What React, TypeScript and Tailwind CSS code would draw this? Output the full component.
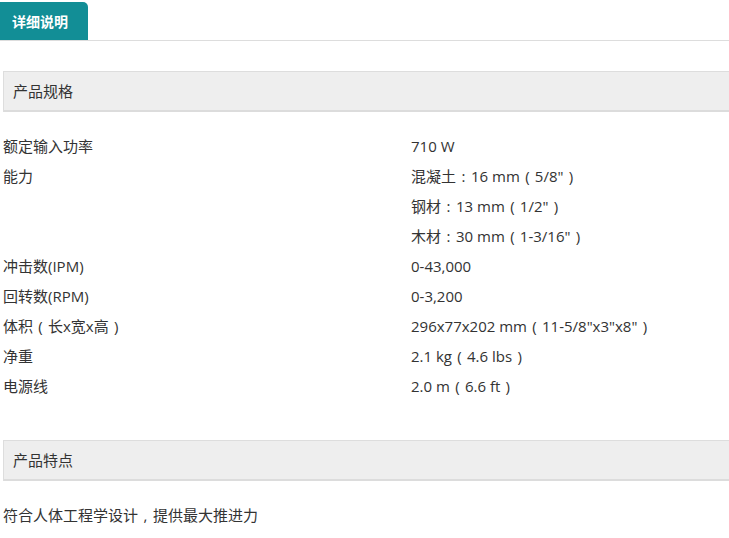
const specs: [string, string[]][] = [
  ["额定输入功率", ["710 W"]],
  ["能力", ["混凝土：16 mm（5/8\"）", "钢材：13 mm（1/2\"）", "木材：30 mm（1-3/16\"）"]],
  ["冲击数(IPM)", ["0-43,000"]],
  ["回转数(RPM)", ["0-3,200"]],
  ["体积（长x宽x高）", ["296x77x202 mm（11-5/8\"x3\"x8\"）"]],
  ["净重", ["2.1 kg（4.6 lbs）"]],
  ["电源线", ["2.0 m（6.6 ft）"]],
]

const centered: Record<string, string> = { "（": "(", "）": ")", "，": ",", "：": ":" }

// full-width punctuation drawn centered in a 1em box
function Cjk({ text }: { text: string }) {
  const parts = text.split(/([（），：])/)
  return (
    <>
      {parts.map((p, i) =>
        centered[p] ? (
          <span key={i} className="inline-block w-[1em] text-center">
            {centered[p]}
          </span>
        ) : (
          <span key={i}>{p}</span>
        )
      )}
    </>
  )
}

function SectionHeader({ title }: { title: string }) {
  return (
    <div className="ml-[3px] -mr-[4px] h-[41px] flex items-center pl-[9px] bg-[#eeeeee] border border-[#dddddd] border-b-2 border-b-[#dcdcdc] text-[15px] text-[#333]">
      {title}
    </div>
  )
}

export default function App() {
  return (
    <div
      className="w-[729px] h-[538px] bg-white overflow-hidden text-[#333]"
      style={{ fontFamily: '"Open Sans", "Noto Sans CJK SC", sans-serif' }}
    >
      <div className="pt-[2px] border-b border-[#dddddd] flex">
        <div className="w-[88px] h-[38px] bg-[#128e96] rounded-tr-[5px] text-white text-[14px] font-bold flex items-center pl-[12px]">
          详细说明
        </div>
      </div>

      <div className="mt-[30px]">
        <SectionHeader title="产品规格" />
      </div>

      <div className="mt-[19px] text-[15px]">
        {specs.map(([label, values]) => (
          <div key={label} className="flex">
            <div className="w-[411px] pl-[3px] h-[30px] flex items-center whitespace-pre">
              <Cjk text={label} />
            </div>
            <div className="flex flex-col">
              {values.map((v) => (
                <div key={v} className="h-[30px] flex items-center whitespace-pre">
                  <Cjk text={v} />
                </div>
              ))}
            </div>
          </div>
        ))}
      </div>

      <div className="mt-[39px]">
        <SectionHeader title="产品特点" />
      </div>

      <div className="mt-[24px] pl-[3px] text-[15px] h-[20px] flex items-center whitespace-pre">
        <Cjk text="符合人体工程学设计，提供最大推进力" />
      </div>
    </div>
  )
}
